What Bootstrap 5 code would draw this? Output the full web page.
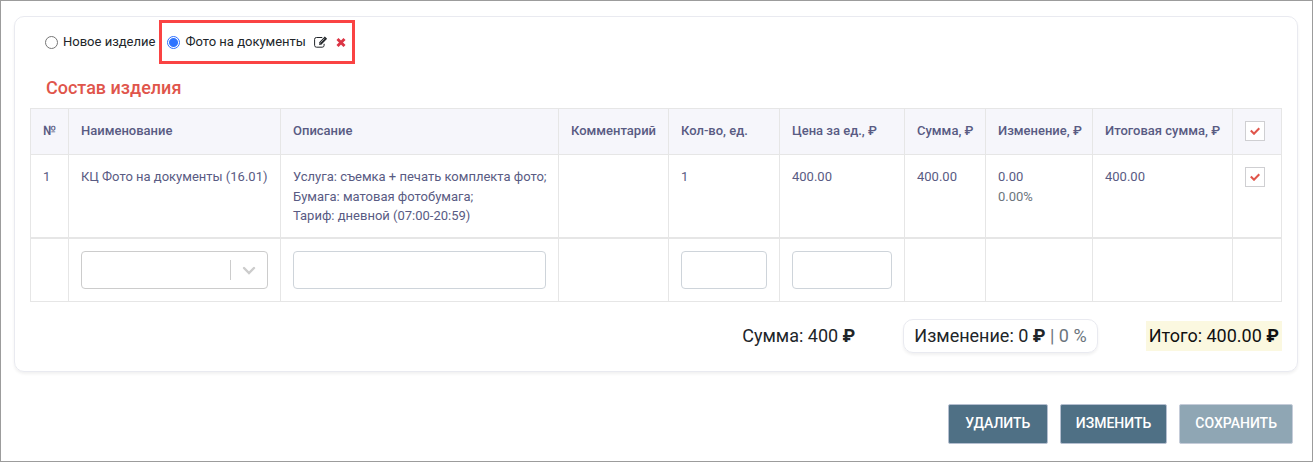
<!DOCTYPE html>
<html lang="ru">
<head>
<meta charset="utf-8">
<meta name="viewport" content="width=device-width, initial-scale=1">
<title>Состав изделия</title>
<link href="https://cdn.jsdelivr.net/npm/bootstrap@5.3.0/dist/css/bootstrap.min.css" rel="stylesheet">
<style>
  body { font-family: Roboto, "Liberation Sans", sans-serif; font-size: 13px; line-height: 1.5; color: #212529; background: #fff; }
  .page-frame { border: 1px solid #9c9c9c; padding: 15px 14px 16px 13px; }
  .order-card { border: 1px solid #e9eaf0; border-radius: 10px; box-shadow: 0 2px 3px rgba(0,0,0,.06); padding: 3px 15px 18px; }
  .choice { height: 44px; border: 3px solid transparent; }
  .radio-label { gap: 5px; }
  .choice .form-check-input { width: 13px; height: 13px; margin: 0; border-color: #767676; flex: none; }
  .choice .form-check-input:checked { border-color: #2f6fff; background-color: #fff; background-image: radial-gradient(circle, #2f74ff 0 4px, #fff 5px); }
  .choice .form-check-input:focus { box-shadow: none; }
  .choice-new { padding: 0 1px 0 12px; }
  .choice-current { border-color: #fa4343; padding: 0 6px 0 5px; }
  .icon-btn { border: 0; background: none; padding: 0; display: flex; }
  .section-title { font-size: 18px; line-height: 24px; font-weight: 500; color: #e0554b; margin: 12px 0 8px 16px; }
  .items { table-layout: fixed; color: #595b83; border-color: #e6e6e6; margin: 0; min-width: 1160px; --bs-table-color: #595b83; }
  .items > :not(caption) > * > * { padding: 12px; color: #595b83; background: none; box-shadow: none; }
  .items > thead > tr > th { background: #f6f6fb; font-weight: 500; white-space: nowrap; padding-bottom: 13px; vertical-align: top; }
  .items > .item-rows > tr > td { padding-bottom: 11px; }
  .items > tbody + tbody { border-top: 2px solid #e6e6e6; }
  .c-num { width: 38px } .c-name { width: 212px } .c-note { width: 110px } .c-qty { width: 111px }
  .c-price { width: 125px } .c-sum { width: 81px } .c-diff { width: 107px } .c-total { width: 140px } .c-pick { width: 49px }
  .items .form-control, .items .form-select { height: 38px; border: 1px solid #ced4da; border-radius: 4px; font-size: 13px; padding: 6px 12px; }
  .items .form-select { border-color: #ccc; background-size: 38px 20px; background-position: right 0 center;
    background-image: url("data:image/svg+xml,%3Csvg xmlns='http://www.w3.org/2000/svg' viewBox='0 0 38 20'%3E%3Cpath fill='%23ccc' d='M1 0h1v20H1z'/%3E%3Cpath fill='none' stroke='%23ccc' stroke-width='2.4' stroke-linecap='round' d='M15 8l5 5 5-5'/%3E%3C/svg%3E"); }
  .pick { display: block; appearance: none; width: 20px; height: 20px; margin: 0; border: 1px solid #cfcfd2; background: #fff center/10px 8px no-repeat; }
  .pick:checked { background-image: url("data:image/svg+xml,%3Csvg xmlns='http://www.w3.org/2000/svg' viewBox='0 0 10 8'%3E%3Cpath fill='none' stroke='%23e0554b' stroke-width='2.1' d='M.8 3.6L4 6.7 9.3 1.3'/%3E%3C/svg%3E"); }
  .totals { font-size: 18px; line-height: 28px; gap: 48px; margin-top: 17px; }
  .diff-box { border: 1px solid #e9eaf0; border-radius: 10px; box-shadow: 0 2px 3px rgba(0,0,0,.06); padding: 2px 10px; }
  .diff-box .pct { color: #6c757d; }
  .grand { background: #fbf8e0; padding: 0 3px; line-height: 30px; color: #111; }
  .actions { gap: 12px; margin-top: 32px; padding-right: 5px; }
  .act { font-size: 14px; line-height: 20px; font-weight: 500; color: #fff; background: #4f7085; border: 1px solid #b5bfd0; border-radius: 2px; padding: 8px 15px 10px; min-width: 100px; text-transform: uppercase; }
  .act:hover { background: #456477; color: #fff; }
  .act:disabled { background: #8fa6b4; color: #fff; border-color: #c5ccd9; opacity: 1; }
</style>
</head>
<body>
<div class="page-frame min-vh-100">
  <main>
    <section class="order-card">
      <div class="d-flex">
        <label class="choice choice-new radio-label d-flex align-items-center">
          <input class="form-check-input" type="radio" name="product"> Новое изделие
        </label>
        <div class="choice choice-current d-flex align-items-center">
          <label class="radio-label d-flex align-items-center">
            <input class="form-check-input" type="radio" name="product" checked> Фото на документы
          </label>
          <button class="icon-btn ms-2" type="button" aria-label="Переименовать">
            <svg width="14" height="12" viewBox="0 0 14 12" fill="none" stroke="#212529"><path d="M8.300 1.500H2.500Q.6 1.500.6 3.300V9.300Q.6 11.200 2.500 11.200H8.200Q10.100 11.200 10.100 9.300V7.800"/><path d="M5 6.400L10.800.6l2.300 2.200-5.800 5.900H5z" fill="#212529" stroke="none"/><path d="M6.500 6.600l4-4M5.800 7.900v-.9" stroke="#fff" stroke-width=".6"/></svg>
          </button>
          <button class="icon-btn ms-2" type="button" aria-label="Удалить изделие">
            <svg width="10" height="10" viewBox="0 0 10 10"><path d="M1.500 2l7 7M8.500 2l-7 7" stroke="#dc3545" stroke-width="2.900"/></svg>
          </button>
        </div>
      </div>
      <h2 class="section-title">Состав изделия</h2>
      <table class="table table-bordered items">
        <colgroup><col class="c-num"><col class="c-name"><col><col class="c-note"><col class="c-qty"><col class="c-price"><col class="c-sum"><col class="c-diff"><col class="c-total"><col class="c-pick"></colgroup>
        <thead>
          <tr><th>№</th><th>Наименование</th><th>Описание</th><th>Комментарий</th><th>Кол-во, ед.</th><th>Цена за ед., ₽</th><th>Сумма, ₽</th><th>Изменение, ₽</th><th>Итоговая сумма, ₽</th><th><input class="pick" type="checkbox" aria-label="Выбрать все" checked></th></tr>
        </thead>
        <tbody class="item-rows">
          <tr><td>1</td><td>КЦ Фото на документы (16.01)</td><td class="text-nowrap">Услуга: съемка + печать комплекта фото;<br>Бумага: матовая фотобумага;<br>Тариф: дневной (07:00-20:59)</td><td></td><td>1</td><td>400.00</td><td>400.00</td><td>0.00<br><span class="text-secondary">0.00%</span></td><td>400.00</td><td><input class="pick" type="checkbox" aria-label="Выбрать строку" checked></td></tr>
        </tbody>
        <tbody>
          <tr><td></td><td><select class="form-select" aria-label="Наименование"><option></option></select></td><td><input class="form-control" type="text" aria-label="Описание"></td><td></td><td><input class="form-control" type="text" aria-label="Количество"></td><td><input class="form-control" type="text" aria-label="Цена"></td><td></td><td></td><td></td><td></td></tr>
        </tbody>
      </table>
      <div class="totals d-flex justify-content-end align-items-center">
        <div>Сумма: 400 <b>₽</b></div>
        <div class="diff-box">Изменение: 0 <b>₽</b> <span class="pct">| 0 %</span></div>
        <div class="grand">Итого: 400.00 <b>₽</b></div>
      </div>
    </section>
    <div class="actions d-flex justify-content-end">
      <button class="btn act" type="button">Удалить</button>
      <button class="btn act" type="button">Изменить</button>
      <button class="btn act" type="button" disabled>Сохранить</button>
    </div>
  </main>
</div>
<script src="https://cdn.jsdelivr.net/npm/bootstrap@5.3.0/dist/js/bootstrap.bundle.min.js"></script>
</body>
</html>
